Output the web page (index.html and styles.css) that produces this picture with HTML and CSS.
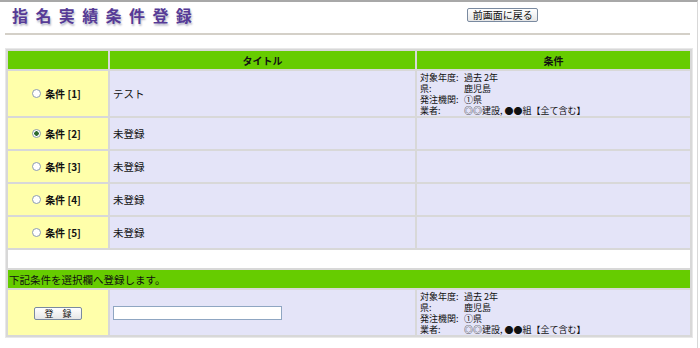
FILE: index.html
```html
<!DOCTYPE html>
<html lang="ja">
<head>
  <meta charset="UTF-8" />
  <title>指名実績条件登録</title>
  <link rel="stylesheet" href="styles.css">
</head>
<body>
  <div class="page">
    <div class="head">
      <h1 class="title">指名実績条件登録</h1>
      <button class="btn back">前画面に戻る</button>
    </div>
    <div class="rule"></div>

    <table class="list">
      <tr class="hd">
        <th class="c1"></th>
        <th class="c2">タイトル</th>
        <th class="c3">条件</th>
      </tr>
      <tr class="tall">
        <td class="sel"><label><input type="radio" name="jk"> 条件 [1]</label></td>
        <td class="ttl">テスト</td>
        <td class="cond">
          <div class="ln"><span class="k">対象年度:</span>過去 2年</div>
          <div class="ln"><span class="k">県:</span>鹿児島</div>
          <div class="ln"><span class="k">発注機関:</span>①県</div>
          <div class="ln"><span class="k">業者:</span>◎◎建設, ●●組【全て含む】</div>
        </td>
      </tr>
      <tr>
        <td class="sel"><label><input type="radio" name="jk" checked> 条件 [2]</label></td>
        <td class="ttl">未登録</td>
        <td class="cond"></td>
      </tr>
      <tr>
        <td class="sel"><label><input type="radio" name="jk"> 条件 [3]</label></td>
        <td class="ttl">未登録</td>
        <td class="cond"></td>
      </tr>
      <tr>
        <td class="sel"><label><input type="radio" name="jk"> 条件 [4]</label></td>
        <td class="ttl">未登録</td>
        <td class="cond"></td>
      </tr>
      <tr>
        <td class="sel"><label><input type="radio" name="jk"> 条件 [5]</label></td>
        <td class="ttl">未登録</td>
        <td class="cond"></td>
      </tr>
      <tr class="blank">
        <td colspan="3"></td>
      </tr>
      <tr class="msg">
        <td colspan="3">下記条件を選択欄へ登録します。</td>
      </tr>
      <tr class="tall">
        <td class="sel"><button class="btn reg">登　録</button></td>
        <td class="ttl"><input type="text" class="name"></td>
        <td class="cond">
          <div class="ln"><span class="k">対象年度:</span>過去 2年</div>
          <div class="ln"><span class="k">県:</span>鹿児島</div>
          <div class="ln"><span class="k">発注機関:</span>①県</div>
          <div class="ln"><span class="k">業者:</span>◎◎建設, ●●組【全て含む】</div>
        </td>
      </tr>
    </table>
  </div>
</body>
</html>
```

FILE: styles.css
```css
*{box-sizing:border-box}
body{margin:0;background:#fff;font-family:"Noto Sans CJK JP","Noto Sans",sans-serif;color:#111}
.page{width:698px;height:348px;border-top:2px solid #a8a8a8;border-right:1px solid #d8d8d8}
.head{display:flex;align-items:flex-start;height:30px;padding-left:12px}
.title{margin:3px 0 0;font-size:16px;line-height:20px;font-weight:bold;letter-spacing:7.4px;color:#563a96;text-shadow:1px 2px 2px #b8b8c8}
.btn{font-family:"Noto Sans CJK JP",sans-serif;font-size:10px;line-height:10px;color:#111;background:linear-gradient(#fff,#e6e6e6);border:1px solid #7a8aa0;border-radius:2px;padding:0;cursor:pointer}
.back{width:71px;height:14px;margin:6px 0 0 268px}
.rule{margin:1px 7px 0 5px;border-top:2px solid #d4d0c8}
.list{margin:13px 0 0 5px;width:688px;border-collapse:separate;border-spacing:2px;background:#d8d8d8;border:1px solid #e8e8e8;font-size:10.5px}
.list td,.list th{padding:0;border:0}
.hd th{height:18px;background:#66cc00;font-size:10px;font-weight:bold;text-align:center}
.c1{width:100px}
.c2{width:305px}
.sel{background:#ffffaa;text-align:center;height:31px;font-size:10px;font-weight:bold}
.sel label{display:inline-flex;align-items:center;gap:4px;margin-left:-3px}
.sel input[type=radio]{appearance:none;width:9px;height:9px;margin:0;border:1px solid #8d9cb0;border-radius:50%;background:#fff}
.sel input[type=radio]:checked{background:radial-gradient(circle,#2f6a2f 0 2px,#fff 2.5px)}
.tall .sel,.tall td{height:45px}
.ttl{background:#e4e4f8;padding-left:3px!important}
.cond{background:#e4e4f8;font-size:9px;padding:1px 0 0 3px!important;vertical-align:top}
.ln{height:11px;line-height:11px;white-space:nowrap}
.k{display:inline-block;width:44px}
.blank td{height:18px;background:#fff}
.msg td{height:18px;background:#66cc00;font-size:10.5px;padding-left:1px!important}
.reg{width:48px;height:13px;font-size:9px}
.name{width:169px;height:14px;border:1px solid #8fa6c2;margin-left:0;padding:0}
```
